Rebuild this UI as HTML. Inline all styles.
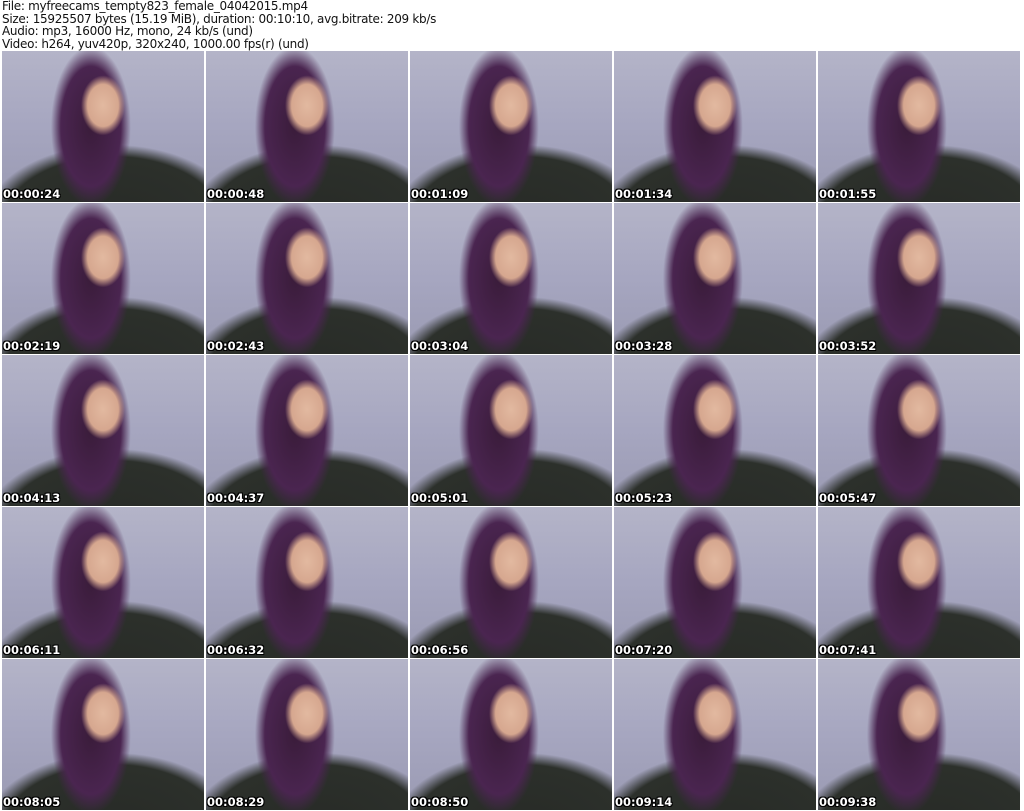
<!DOCTYPE html>
<html><head><meta charset="utf-8"><style>
body{margin:0;width:1024px;height:811px;background:#fff;overflow:hidden;position:relative;font-family:"DejaVu Sans","Liberation Sans",sans-serif}
.h{position:absolute;left:2px;top:0;font-size:12px;line-height:12.5px;color:#111;white-space:pre;letter-spacing:-0.3px}
.t{position:absolute;width:202px;height:151px;overflow:hidden;
background:
radial-gradient(ellipse 22px 30px at 50% 36%,#e2b9a0 0%,#d6a78f 70%,transparent 100%),
radial-gradient(ellipse 40px 80px at 44% 50%,#3a1c3a 0%,#4a2550 75%,transparent 100%),
radial-gradient(ellipse 130px 80px at 55% 115%,#272a26 0%,#2c302b 85%,transparent 100%),
linear-gradient(180deg,#b4b4c8 0%,#a6a6c0 50%,#9a9ab2 100%);}
.t span{position:absolute;left:1px;bottom:1px;color:#fff;font-size:11.5px;font-weight:bold;text-shadow:1px 1px 0 #000,-1px -1px 0 #000,1px -1px 0 #000,-1px 1px 0 #000}
</style></head><body>
<div class="h">File: myfreecams_tempty823_female_04042015.mp4
Size: 15925507 bytes (15.19 MiB), duration: 00:10:10, avg.bitrate: 209 kb/s
Audio: mp3, 16000 Hz, mono, 24 kb/s (und)
Video: h264, yuv420p, 320x240, 1000.00 fps(r) (und)</div>
<div class="t" style="left:2px;top:51px"><span>00:00:24</span></div>
<div class="t" style="left:206px;top:51px"><span>00:00:48</span></div>
<div class="t" style="left:410px;top:51px"><span>00:01:09</span></div>
<div class="t" style="left:614px;top:51px"><span>00:01:34</span></div>
<div class="t" style="left:818px;top:51px"><span>00:01:55</span></div>
<div class="t" style="left:2px;top:203px"><span>00:02:19</span></div>
<div class="t" style="left:206px;top:203px"><span>00:02:43</span></div>
<div class="t" style="left:410px;top:203px"><span>00:03:04</span></div>
<div class="t" style="left:614px;top:203px"><span>00:03:28</span></div>
<div class="t" style="left:818px;top:203px"><span>00:03:52</span></div>
<div class="t" style="left:2px;top:355px"><span>00:04:13</span></div>
<div class="t" style="left:206px;top:355px"><span>00:04:37</span></div>
<div class="t" style="left:410px;top:355px"><span>00:05:01</span></div>
<div class="t" style="left:614px;top:355px"><span>00:05:23</span></div>
<div class="t" style="left:818px;top:355px"><span>00:05:47</span></div>
<div class="t" style="left:2px;top:507px"><span>00:06:11</span></div>
<div class="t" style="left:206px;top:507px"><span>00:06:32</span></div>
<div class="t" style="left:410px;top:507px"><span>00:06:56</span></div>
<div class="t" style="left:614px;top:507px"><span>00:07:20</span></div>
<div class="t" style="left:818px;top:507px"><span>00:07:41</span></div>
<div class="t" style="left:2px;top:659px"><span>00:08:05</span></div>
<div class="t" style="left:206px;top:659px"><span>00:08:29</span></div>
<div class="t" style="left:410px;top:659px"><span>00:08:50</span></div>
<div class="t" style="left:614px;top:659px"><span>00:09:14</span></div>
<div class="t" style="left:818px;top:659px"><span>00:09:38</span></div>
</body></html>
